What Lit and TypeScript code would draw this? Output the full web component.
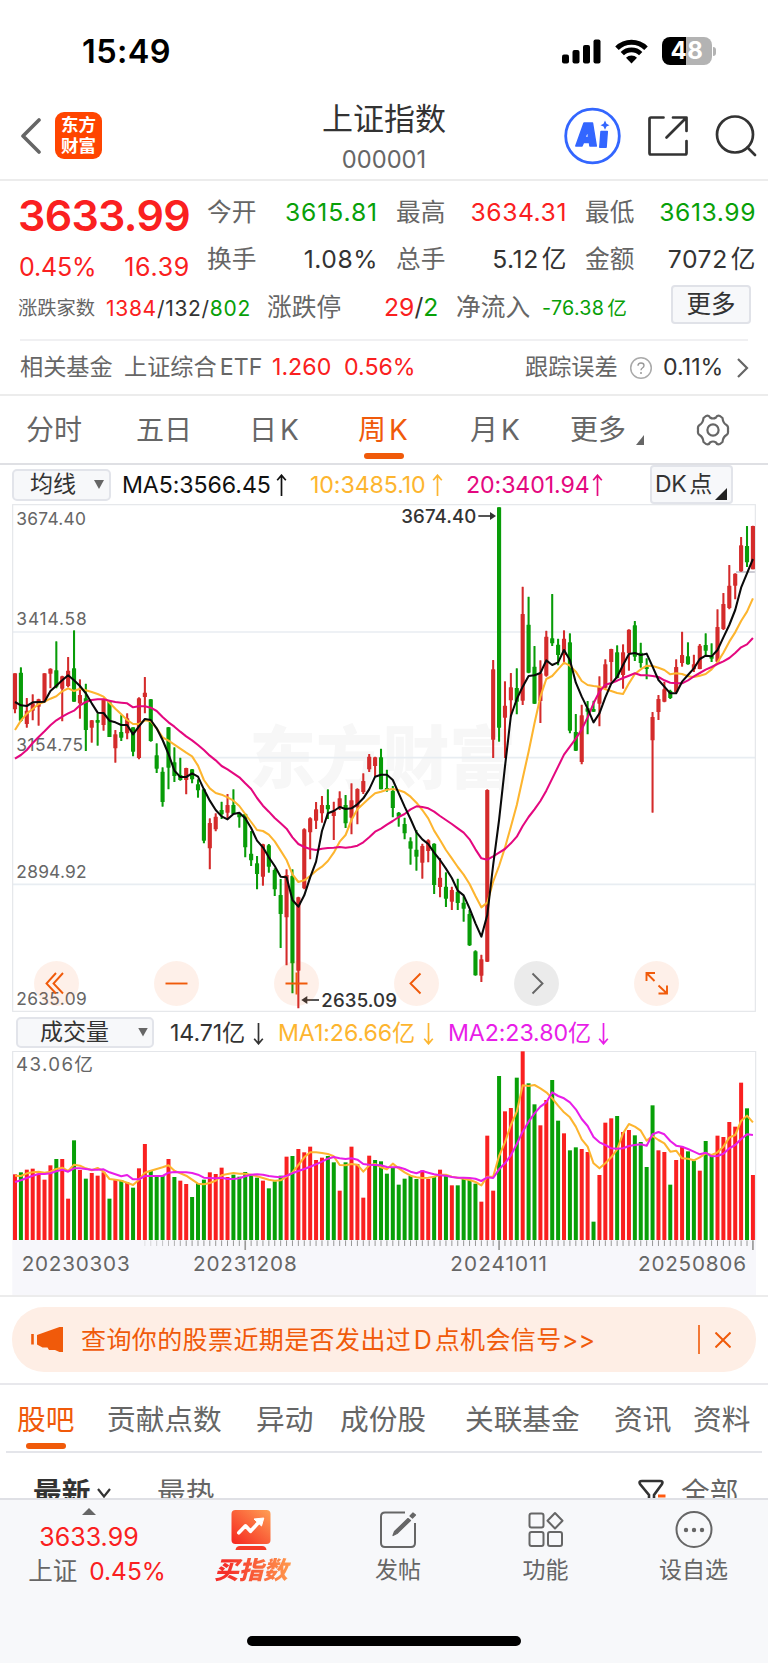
import { LitElement, html, svg, css } from "lit";
import { customElement } from "lit/decorators.js";

const STEP = 17.71;
const FIRST = 45;
const xAt = (i: number) => FIRST + i * STEP;

// One entry per week: direction, high, body top, body bottom, low (chart units).
const CANDLES = `R 520 520 628 640|G 502 518 662 665|R 594 632 672 683|R 583 610 632 661|R 596 598 620 677|R 520 520 605 607|R 505 506 521 565|G 424 511 560 565|R 527 529 566 664|R 471 512 558 562|G 391 505 605 605|R 538 585 610 656|G 551 595 690 753|R 660 661 683 728|G 640 660 668 737|R 596 598 675 692|G 600 605 711 711|R 690 703 745 788|G 645 696 713 723|R 640 655 700 718|G 682 682 755 769|R 592 595 774 778|R 531 578 591 640|G 597 598 723 725|G 730 766 806 819|G 802 815 906 920|G 681 682 803 868|G 742 787 828 846|G 773 825 840 842|R 803 804 840 883|G 807 808 838 850|G 838 853 871 893|G 865 868 1022 1030|R 955 969 1045 1108|R 940 950 988 994|G 905 930 943 957|R 882 915 938 958|G 868 915 942 942|G 938 942 952 983|G 940 942 1042 1072|G 993 1061 1081 1098|G 1068 1090 1122 1168|R 1031 1033 1130 1157|G 1032 1036 1100 1118|G 1105 1110 1168 1188|G 1137 1185 1242 1344|R 1108 1125 1252 1396|G 1108 1128 1390 1480|R 1190 1192 1412 1525|R 985 988 1165 1168|R 952 955 997 1078|R 906 928 962 987|R 888 915 940 968|G 868 915 928 957|R 905 934 948 1020|R 874 895 922 930|G 885 915 970 984|R 850 901 953 1003|R 865 867 922 973|R 820 843 876 882|R 762 770 808 816|R 770 772 798 830|G 746 772 868 868|G 809 864 870 875|G 858 873 924 952|G 936 938 950 980|G 953 972 1000 1018|G 1012 1024 1046 1094|G 990 1049 1070 1112|R 1031 1038 1088 1136|R 1018 1021 1053 1087|G 1030 1031 1155 1182|R 1074 1133 1161 1192|G 1117 1160 1196 1221|R 1160 1170 1205 1230|G 1136 1175 1209 1230|G 1188 1208 1226 1265|G 1230 1242 1336 1338|G 1351 1354 1426 1427|R 1364 1378 1427 1446|R 868 870 1385 1386|R 480 508 719 774|G 22 22 683 725|R 544 617 653 774|R 519 562 601 650|G 505 564 605 643|R 260 342 602 615|G 290 374 518 520|G 438 500 611 612|R 481 520 603 669|R 392 410 527 530|G 282 415 430 438|G 416 434 465 496|R 391 416 465 493|G 400 427 692 700|G 642 696 752 753|R 614 646 786 793|G 603 625 635 703|G 602 627 635 636|R 529 560 611 679|R 478 493 563 566|R 446 447 486 545|G 436 457 534 535|R 433 457 525 566|R 388 389 460 512|G 363 376 470 483|G 428 458 489 503|G 475 499 507 538|R 636 651 721 938|R 585 597 636 660|R 545 568 605 607|G 569 573 594 597|R 478 501 576 580|R 395 465 489 500|G 427 469 493 494|R 464 493 508 516|R 432 437 507 508|G 400 435 452 468|G 430 468 476 486|R 328 381 485 488|R 279 312 387 390|R 195 257 324 328|R 220 221 257 298|R 111 136 214 215|G 78 138 187 201|R 77 78 208 208`
  .split("|")
  .map((s) => {
    const [d, ...v] = s.split(" ");
    return { up: d === "R", v: v.map(Number) };
  });

const nums = (s: string) => s.trim().split(/\s+/).map(Number);

const MA5 = nums(`606 616 618 607 606 605 573 557 541 526 541 558 580 610 638 639 662 667 675 675 703 679 657 660 685 720 762 812 831 831 820 830 868 902 930 949 958 942 938 955 984 1022 1042 1072 1098 1130 1132 1200 1220 1186 1132 1085 993 940 933 921 927 925 913 895 868 830 824 824 840 880 920 957 997 1018 1032 1058 1080 1106 1134 1172 1186 1225 1270 1310 1245 1095 960 800 648 597 560 528 526 519 481 495 487 450 480 548 590 626 667 640 592 551 531 495 462 459 465 461 500 540 560 580 580 545 525 505 477 467 469 450 412 375 330 263 220 177`);
const MA10 = nums(`690 662 641 627 612 605 596 589 574 565 573 566 571 576 582 590 608 626 643 660 672 672 661 664 685 712 722 734 746 758 769 797 840 865 879 884 892 902 918 942 966 990 993 1004 1024 1052 1080 1123 1146 1141 1128 1112 1100 1083 1058 1025 1005 960 928 911 895 880 875 869 867 871 877 890 908 930 955 992 1020 1050 1075 1101 1124 1152 1188 1222 1208 1145 1098 1043 980 915 835 755 670 590 537 528 508 488 497 515 543 555 558 560 568 573 579 582 550 522 508 497 498 503 510 523 520 522 529 531 527 522 508 487 458 425 397 363 335 295`);
const MA20 = nums(`776 765 750 729 711 694 676 661 650 640 632 616 606 600 598 598 602 606 608 610 622 619 619 623 633 651 667 680 695 709 721 735 750 767 781 798 808 820 832 850 867 894 917 935 954 970 986 1012 1032 1041 1047 1050 1046 1044 1043 1041 1043 1041 1037 1027 1012 995 986 974 963 951 942 928 919 921 925 935 948 960 972 985 998 1018 1048 1075 1079 1069 1058 1047 1030 1010 978 951 928 903 872 836 800 764 740 716 688 652 610 575 554 549 542 534 527 520 526 526 528 531 541 548 550 550 541 529 519 509 501 492 484 474 459 442 433 414`);

const VOLUME = `R493 G487 R479 R476 R491 R509 R466 G447 R447 R566 G391 R480 G506 R489 R497 R487 G566 R509 G510 R516 G533 R475 R402 G482 G497 G497 R447 G501 R512 R522 G561 G519 G509 R487 R492 R473 R501 G494 G500 G486 G495 G503 R512 G535 G514 G497 R440 G438 R417 R427 R410 R450 R443 G438 G457 R542 G457 R410 R462 R563 R437 G450 G454 G491 G473 G524 G506 G498 G507 R481 R507 G501 R479 G498 R526 G526 G506 G509 G521 R575 R377 R542 G198 R304 R294 G203 R124 G220 G283 R346 R270 G210 G332 R370 G421 G412 R417 R426 G635 R495 R338 R325 G318 R366 R360 G376 G396 G471 G286 R421 R426 G524 R450 R410 G424 G452 R482 G393 G437 R377 R381 R336 R350 R218 G295 R495`
  .split(" ")
  .map((s) => ({ up: s[0] === "R", y: Number(s.slice(1)) }));

const VMA1 = nums(`497 498 490 487 485 488 485 477 473 483 464 467 475 481 474 485 507 509 512 518 525 509 488 482 477 472 466 482 490 497 509 521 523 519 512 496 492 489 491 491 494 499 504 509 512 511 500 487 465 442 427 427 429 432 439 465 466 462 464 485 466 462 472 478 461 475 487 497 502 504 503 500 494 494 500 503 506 510 516 526 500 500 438 397 345 305 226 228 225 235 247 265 287 307 322 350 388 410 460 475 460 442 418 370 342 350 362 392 378 390 400 425 422 445 446 451 442 430 435 427 410 383 375 333 317 337`);
const VMA2 = nums(`516 511 504 497 492 492 490 484 479 485 475 475 477 479 479 478 487 493 499 495 508 508 498 498 498 498 488 486 487 487 489 494 503 504 505 503 507 507 505 499 494 493 494 498 500 502 497 490 483 477 470 463 455 446 441 445 447 445 449 462 464 465 466 471 472 472 477 485 490 483 488 493 496 497 501 503 503 504 506 513 502 504 478 460 436 402 365 335 310 290 277 247 258 265 277 298 327 348 381 397 405 415 416 415 408 405 403 407 373 366 373 393 407 410 417 425 433 428 439 438 431 415 405 387 373 375`);

const line = (vals: number[]) => vals.map((y, i) => `${xAt(i).toFixed(1)},${y}`).join(" ");

const base = css`
  * { box-sizing: border-box; }
  svg { display: block; }
`;

@customElement("price-chart")
class PriceChart extends LitElement {
  static styles = [base, css`
    :host { display: block; position: relative; height: 508px; }
    text { font-family: Inter, "Noto Sans CJK SC", sans-serif; }
    .axis { font-size: 52px; fill: #666; }
    .mark { font-size: 56px; font-weight: 500; fill: #333; }
    .wm { font-family: "Noto Sans CJK SC", sans-serif; font-weight: 900; font-size: 206px; fill: #f7f7f7; }
    .tools { position: absolute; left: 34px; top: 457px; display: flex; gap: 75px; }
    .tool { width: 45px; height: 45px; border-radius: 50%; background: rgba(240, 90, 10, 0.09); }
    .next { background: rgba(0, 0, 0, 0.08); }
    .ico { fill: none; stroke: #f05a0a; stroke-width: 1.9; }
    .ico.dim { stroke: #666; }
  `];

  render() {
    const grids = [396, 773, 1153];
    const labels: [string, number][] = [["3674.40", 75], ["3414.58", 375], ["3154.75", 753], ["2894.92", 1134], ["2635.09", 1514]];
    const tools = [
      svg`<path d="M22 12 L12.5 22.5 L22 32.500 M29 12 L19.500 22.5 L29 32.500"/>`,
      svg`<path d="M11.500 22.500 H33.500"/>`,
      svg`<path d="M11.500 22.500 H33.500 M22.500 11.500 V33.500"/>`,
      svg`<path d="M26.500 12.500 L16.500 22.500 L26.500 32.500"/>`,
      svg`<path d="M18.500 12.500 L28.500 22.500 L18.500 32.500"/>`,
      svg`<path d="M12.500 20 V12 H21 M12.500 12 L20.500 20 M33 24.500 V32.500 H24.500 M33 32.500 L24.500 24.500"/>`,
    ];
    return html`
      <svg width="768" height="508" viewBox="0 12 2304 1524">
        <text class="wm" x="748" y="849" textLength="800" lengthAdjust="spacingAndGlyphs">东方财富</text>
        ${grids.map((y) => svg`<line x1="38" x2="2266" y1=${y} y2=${y} stroke="#e8edf2" stroke-width="5"/>`)}
        <line x1="2208" x2="2266" y1="216" y2="216" stroke="#ccccd4" stroke-width="6"/>
        <rect x="38" y="14" width="2228" height="1520" fill="none" stroke="#e4e6ea" stroke-width="3.500"/>
        ${labels.map(([t, y]) => svg`<text class="axis" x="49" y=${y} textLength=${t === "3674.40" ? 209 : t === "3154.75" ? 200 : 211}>${t}</text>`)}
        ${CANDLES.map(({ up, v }, i) => svg`
          <g fill=${up ? "#d42b2b" : "#089c08"}>
            <rect x=${xAt(i) - 3.1} y=${v[0]} width="6.200" height=${v[3] - v[0]} rx="1"/>
            <rect x=${xAt(i) - 6.2} y=${v[1]} width="12.400" height=${Math.max(v[2] - v[1], 6)} rx="1"/>
          </g>`)}
        <g fill="none" stroke-width="6.200" stroke-linejoin="round">
          <polyline points=${line(MA10)} stroke="#fdb52f"/>
          <polyline points=${line(MA20)} stroke="#e4087f"/>
          <polyline points=${line(MA5)} stroke="#0a0a0a"/>
        </g>
        <text class="mark" x="1204" y="70" textLength="225">3674.40</text>
        <path d="M1435 48 H1475" stroke="#333" stroke-width="5"/><path d="M1470 36 L1488 48 L1470 60Z" fill="#333"/>
        <text class="mark" x="964" y="1522" textLength="227">2635.09</text>
        <path d="M957 1500 H920" stroke="#333" stroke-width="5"/><path d="M922 1488 L904 1500 L922 1512Z" fill="#333"/>
      </svg>
      <div class="tools">
        ${tools.map((t, i) => html`<div class="tool ${i === 4 ? "next" : ""}">
          <svg class="ico ${i === 4 ? "dim" : ""}" width="45" height="45">${t}</svg></div>`)}
      </div>`;
  }
}

@customElement("volume-chart")
class VolumeChart extends LitElement {
  static styles = [base, css`
    :host { display: block; height: 244px; }
    text { font-family: Inter, "Noto Sans CJK SC", sans-serif; fill: #666; }
    .top { font-size: 56px; }
    .date { font-size: 62px; }
  `];
  render() {
    const dates: [string, number, number][] = [["20230303", 65, 324], ["20231208", 579, 311], ["20241011", 1351, 290], ["20250806", 1914, 324]];
    return html`<svg width="768" height="244" viewBox="0 123 2304 732">
      <rect x="37" y="690" width="2231" height="165" fill="#f7f7fb"/>
      <path d="M38 690 V124 H2267 V690" fill="none" stroke="#e4e6ea" stroke-width="3.500"/>
      ${VOLUME.map(({ up, y }, i) => svg`<rect x=${xAt(i) - 6} y=${y} width="12" height=${690 - y} fill=${up ? "#fa2020" : "#08a008"}/>`)}
      ${VOLUME.map((_, i) => i < 22 ? null : svg`<line x1=${xAt(i)} x2=${xAt(i)} y1="691" y2=${[39, 82, 125].includes(i) ? 720 : 708}
        stroke="#999" stroke-width=${[39, 82, 125].includes(i) ? 5 : 3} opacity=${i < 29 ? 0.25 + (i - 22) * 0.1 : 1}/>`)}
      <g fill="none" stroke-width="6.200" stroke-linejoin="round">
        <polyline points=${line(VMA1)} stroke="#fdb52f"/>
        <polyline points=${line(VMA2)} stroke="#e81ee8"/>
      </g>
      <text class="top" x="48" y="182" textLength="231">43.06亿</text>
      ${dates.map(([t, x, w]) => svg`<text class="date" x=${x} y="784" textLength=${w}>${t}</text>`)}
    </svg>`;
  }
}

const arrow = (down = false) => html`<svg class="arrow" width="11" height="23" viewBox="0 0 11 23">
  <path d=${down ? "M5.500 1 V21.500 M1.200 16.800 L5.500 21.800 L9.800 16.800" : "M5.500 22 V1.500 M1.200 6.200 L5.500 1.200 L9.800 6.200"}
    fill="none" stroke="currentColor" stroke-width="1.700"/></svg>`;

@customElement("app-root")
class AppRoot extends LitElement {
  static styles = [base, css`
    :host {
      display: flex; flex-direction: column; width: 768px; height: 1663px; overflow: hidden;
      background: #fff; color: #333; white-space: nowrap;
      font-family: Inter, "Noto Sans CJK SC", sans-serif; line-height: 1; font-size: 24px;
    }
    .red { color: #fa2020; } .green { color: #08a008; } .gray { color: #666; }
    .u { margin-left: 3px; }
    .status { height: 91px; flex: none; display: grid; grid-template-columns: 82px 480px 53px 47px auto; align-items: center; padding-top: 11px; color: #000; }
    .time { grid-column: 2; font-size: 32.500px; font-weight: 600; letter-spacing: 0.4px; padding-top: 3px; }
    .batt { display: flex; align-items: center; gap: 1px; }
    .cell { width: 50px; height: 28px; border-radius: 8px; background: linear-gradient(90deg, #000 48%, #b3b3b3 48%); color: #fff; font-size: 24px; font-weight: 700; display: flex; align-items: center; justify-content: center; letter-spacing: 0.5px; }
    .nub { width: 3px; height: 9px; border-radius: 0 4px 4px 0; background: #b3b3b3; }

    .head { height: 90px; flex: none; display: grid; grid-template-columns: 20px 35px 267px 242px 83px 68px 53px; align-items: center; border-bottom: 2px solid #ececec; padding-top: 2px; }
    .back { grid-column: 2; }
    .logo { width: 47px; height: 47px; border-radius: 9px; background: #ff4500; color: #fff; font-weight: 700; font-size: 17.500px; line-height: 21px; display: flex; flex-direction: column; align-items: center; justify-content: center; padding-bottom: 1px; margin-top: -2px; }
    .title { display: flex; flex-direction: column; align-items: center; width: 124px; }
    .name { font-size: 31px; line-height: 42px; margin-top: 2px; }
    .code { font-size: 23.700px; line-height: 32px; color: #666; letter-spacing: 0; margin-top: 4px; }

    .quote { height: 215px; flex: none; border-bottom: 2px solid #ececec; }
    .qtop { display: grid; grid-template-columns: 188px 171px 18px 171px 18px 171px; grid-template-rows: 47px 47px; padding: 8px 0 0 19px; align-items: center; }
    .lead { grid-row: 1 / 3; display: flex; flex-direction: column; align-self: start; }
    .price { font-size: 43px; font-weight: 600; letter-spacing: -0.7px; line-height: 54px; margin-top: -1px; margin-left: -1px; }
    .chg { display: flex; justify-content: space-between; width: 171px; font-size: 25px; line-height: 50px; letter-spacing: -0.2px; }
    .amt { letter-spacing: 0.7px; }
    .pair { display: flex; justify-content: space-between; align-items: center; font-size: 24.700px; }
    .val { letter-spacing: 0.55px; }
    .val.wide { letter-spacing: 0.9px; }
    .c2 { grid-column: 2; } .c4 { grid-column: 4; } .c6 { grid-column: 6; }
    .qrow { display: grid; grid-template-columns: 88px 161px 117px 72px 86px 129px 80px; align-items: center; height: 46px; padding-left: 18px; margin-top: 1px; }
    .small { font-size: 19.300px; padding-top: 4px; }
    .flow { font-size: 19.700px; letter-spacing: 0.3px; }
    .cnt { font-size: 21px; padding-top: 3px; letter-spacing: 0.7px; }
    .mid { font-size: 24.700px; }
    .more { width: 80px; height: 39px; border: 2px solid #e0e2e8; border-radius: 4px; background: #f7f8fa; display: flex; align-items: center; justify-content: center; font-size: 24.500px; margin-top: -5px; }
    .fund { display: grid; grid-template-columns: 104px 148px 72px 181px 104px 34px 73px 14px; align-items: center; height: 55px; margin: 9px 20px 0; width: 728px; border-top: 2px solid #f0f0f2; font-size: 23.200px; }

    .tabs { height: 69px; flex: none; display: grid; grid-template-columns: 26px 110px 113px 109px 112px 100px 66px 61px auto; border-bottom: 2px solid #dfe0e4; color: #666; font-size: 28px; line-height: 69px; }
    .tab { white-space: nowrap; }
    .first { grid-column: 2; }
    .on { color: #f05a0a; position: relative; }
    .on::after { content: ""; position: absolute; left: 6px; top: 57px; width: 40px; height: 6px; border-radius: 3px; background: #f05a0a; }
    .corner { width: 8px; height: 10px; background: #666; clip-path: polygon(100% 0, 100% 100%, 0 100%); margin-top: 39px; }
    .gear { margin-top: 17px; margin-left: -2px; }

    .mas { height: 39px; flex: none; display: grid; grid-template-columns: 12px 110px 154px 34px 122px 34px 126px 58px 83px; align-items: center; font-size: 23px; }
    .drop { grid-column: 2; display: flex; align-items: center; width: 99px; height: 32px; border: 2px solid #e2e4ea; border-radius: 5px; background: #f7f8fa; padding-left: 16px; gap: 18px; }
    .tri { width: 10px; height: 9px; background: #666; clip-path: polygon(0 0, 100% 0, 50% 100%); }
    .black { color: #111; } .gold { color: #fdb52f; } .pink { color: #e4087f; } .vio { color: #e81ee8; }
    .ma { font-size: 23.200px; letter-spacing: -0.1px; padding-top: 2px; }
    .arrow { margin-top: 1px; }
    .dk { width: 83px; height: 39px; background: #f7f8fa; border: 2px solid #e2e4ea; border-radius: 4px; display: flex; align-items: center; position: relative; padding-left: 3px; letter-spacing: -0.4px; }
    .dk::after { content: ""; position: absolute; right: 4px; bottom: 2px; width: 12px; height: 12px; background: #222; clip-path: polygon(100% 0, 100% 100%, 0 100%); }
    .vols { height: 39px; flex: none; display: grid; grid-template-columns: 16px 154px 83px 25px 145px 25px 150px auto; align-items: center; font-size: 23px; padding-top: 2px; }
    .vdrop { width: 138px; height: 31px; padding-left: 22px; gap: 29px; margin-top: -1px; }

    .promo { height: 90px; flex: none; border-top: 2px solid #ececec; border-bottom: 2px solid #e8e8ec; padding: 10px 12px; }
    .pill { height: 65px; border-radius: 32px; background: #feeee5; display: grid; grid-template-columns: 19px 50px 617px 17px auto; align-items: center; color: #f05a0a; font-size: 25px; }
    .ptext { letter-spacing: 0.4px; padding-top: 1px; }
    .ptext .d { margin: 0 2.500px; }
    .bar { width: 2px; height: 29px; background: #f05a0a; opacity: 0.8; }
    .nav { height: 68px; flex: none; margin: 0 6px; padding-left: 11px; border-bottom: 2px solid #e4e5ea; display: grid; grid-template-columns: 90px 149px 84px 125px 149px 79px auto; font-size: 28.700px; line-height: 70px; color: #666; }
    .nav .on::after { left: 9px; top: 58px; width: 40px; }
    .filter { height: 45px; flex: none; overflow: hidden; display: grid; grid-template-columns: 33px 64px 60px 481px 43px auto; font-size: 28.700px; line-height: 29px; padding-top: 25px; color: #666; }
    .cur { grid-column: 2; color: #333; font-weight: 700; }
    .foot { height: 165px; flex: none; background: #f7f8fa; border-top: 2px solid #dfe0e5; display: flex; flex-direction: column; align-items: center; }
    .acts { width: 768px; height: 136px; display: grid; grid-template-columns: 178px 146px 148px 147px 149px; justify-items: center; color: #666; font-size: 23px; }
    .act { display: flex; flex-direction: column; align-items: center; }
    .act svg { margin-top: 9px; height: 42px; }
    .lbl { line-height: 28px; margin-top: 5px; }
    .buy { font-weight: 900; font-size: 24.500px; font-style: italic; background: linear-gradient(90deg, #f5302a 20%, #ff9a4d); -webkit-background-clip: text; background-clip: text; color: transparent; padding: 0 3px; }
    .idx { padding-top: 8px; }
    .up { width: 14px; height: 7px; background: #666; clip-path: polygon(50% 0, 100% 100%, 0 100%); }
    .inum { font-size: 25px; line-height: 34px; margin-top: 5px; }
    .irow { font-size: 24.500px; line-height: 34px; display: flex; gap: 12px; margin-left: 16px; }
    .home { width: 274px; height: 10px; border-radius: 5px; background: #000; }
  `];

  render() {
    return html`
      <div class="status">
        <div class="time">15:49</div>
        <svg width="39" height="25" viewBox="0 0 39 25"><rect y="15.500" width="7" height="9" rx="2"/><rect x="10.500" y="11" width="7" height="13.500" rx="2"/><rect x="21" y="6" width="7" height="18.500" rx="2"/><rect x="31.500" y="0.500" width="7" height="24" rx="2"/></svg>
        <svg width="33" height="25" viewBox="0 0 33 25"><path d="M2 9.200 A20.500 20.500 0 0 1 31 9.200" fill="none" stroke="#000" stroke-width="5"/><path d="M7.300 14.700 A13 13 0 0 1 25.700 14.700" fill="none" stroke="#000" stroke-width="4.600"/><path d="M16.500 24.500 L11 18.800 A7.800 7.800 0 0 1 22 18.800Z"/></svg>
        <div class="batt"><div class="cell">48</div><div class="nub"></div></div>
      </div>

      <div class="head">
        <svg class="back" width="22" height="36" viewBox="0 0 22 36"><path d="M19 2 L3 18 L19 34" fill="none" stroke="#666" stroke-width="3.600" stroke-linecap="round" stroke-linejoin="round"/></svg>
        <div class="logo"><span>东方</span><span>财富</span></div>
        <div class="title"><div class="name">上证指数</div><div class="code">000001</div></div>
        <svg width="57" height="58" viewBox="-28.500 -29 57 58"><circle r="26.800" fill="#fff" stroke="#3366ff" stroke-width="2.800"/>
          <g fill="#3366ff" stroke="#3366ff" stroke-width="1.500" stroke-linejoin="round"><path fill-rule="evenodd" d="M-8.500 -13 H0 L3.800 10 H-2.600 L-3.100 6.500 H-9 L-10.500 10 H-16.700Z M-4 1.500 L-4.800 -5.500 L-7.500 1.500Z"/><path d="M8.500 -4.500 H14.800 L13.600 11.200 H7.300Z"/></g>
          <path d="M12.500 -15.500 L14 -12.200 L17 -10.800 L14 -9.400 L12.500 -6.200 L11 -9.400 L8 -10.800 L11 -12.200Z" fill="#3366ff"/></svg>
        <svg width="42" height="42" viewBox="0 0 42 42"><g fill="none" stroke="#333" stroke-width="2.700" stroke-linejoin="round" stroke-linecap="round"><path d="M16.500 2.500 H4 Q2.500 2.500 2.500 4 V38 Q2.500 39.500 4 39.500 H38 Q39.500 39.500 39.500 38 V26"/><path d="M26 2.500 H39.500 V16 M39 3 L19.500 22.500"/></g></svg>
        <svg width="42" height="42" viewBox="0 0 42 42"><g fill="none" stroke="#333" stroke-width="2.700" stroke-linecap="round"><circle cx="20" cy="19.500" r="18"/><path d="M32.500 32.500 L40 40"/></g></svg>
      </div>

      <div class="quote">
        <div class="qtop">
          <div class="lead red"><div class="price">3633.99</div><div class="chg"><span>0.45%</span><span class="amt">16.39</span></div></div>
          <div class="pair c2"><span class="gray">今开</span><span class="val wide green">3615.81</span></div>
          <div class="pair c4"><span class="gray">最高</span><span class="val red">3634.31</span></div>
          <div class="pair c6"><span class="gray">最低</span><span class="val green">3613.99</span></div>
          <div class="pair c2"><span class="gray">换手</span><span class="val">1.08%</span></div>
          <div class="pair c4"><span class="gray">总手</span><span class="val">5.12<span class="u">亿</span></span></div>
          <div class="pair c6"><span class="gray">金额</span><span class="val">7072<span class="u">亿</span></span></div>
        </div>
        <div class="qrow">
          <span class="small gray">涨跌家数</span>
          <span class="cnt"><span class="red">1384</span>/132/<span class="green">802</span></span>
          <span class="mid gray">涨跌停</span>
          <span class="mid"><span class="red">29</span>/<span class="green">2</span></span>
          <span class="mid gray">净流入</span>
          <span class="small flow green">-76.38<span class="u">亿</span></span>
          <div class="more">更多</div>
        </div>
        <div class="fund">
          <span class="gray">相关基金</span><span class="gray">上证综合<span class="u">ETF</span></span><span class="red">1.260</span><span class="red">0.56%</span>
          <span class="gray">跟踪误差</span>
          <svg width="24" height="24" viewBox="0 0 24 24"><circle cx="12" cy="12" r="10.300" fill="none" stroke="#aaa" stroke-width="1.500"/><path d="M9 9.800 Q9 7 12 7 Q15 7 15 9.500 Q15 11 13.400 12 Q12 12.900 12 14.300" fill="none" stroke="#999" stroke-width="1.400"/><circle cx="12" cy="17" r="1" fill="#999"/></svg>
          <span>0.11%</span>
          <svg width="14" height="22" viewBox="0 0 14 22"><path d="M2 2 L11 11 L2 20" fill="none" stroke="#666" stroke-width="2.200"/></svg>
        </div>
      </div>

      <div class="tabs">
        <div class="tab first">分时</div><div class="tab">五日</div><div class="tab">日<span class="u">K</span></div><div class="tab on">周<span class="u">K</span></div><div class="tab">月<span class="u">K</span></div><div class="tab">更多</div>
        <div class="corner"></div>
        <svg class="gear" width="36" height="34" viewBox="-18 -17 36 34"><g fill="none" stroke="#666" stroke-width="2.200" stroke-linejoin="round"><path d="M-7 -14 Q-4 -15 -3 -12.500 Q0 -10.500 3 -12.500 Q4 -15 7 -14 L9.500 -12 Q10 -7 13.500 -5 Q15.500 -4 15 0 Q15.500 4 13.500 5 Q10 7 9.500 12 L7 14 Q4 15 3 12.500 Q0 10.500 -3 12.500 Q-4 15 -7 14 L-9.500 12 Q-10 7 -13.500 5 Q-15.500 4 -15 0 Q-15.500 -4 -13.500 -5 Q-10 -7 -9.500 -12Z"/><circle r="5.600"/></g></svg>
      </div>

      <div class="mas">
        <div class="drop"><span>均线</span><i class="tri"></i></div>
        <span class="ma black">MA5:3566.45</span><span class="black">${arrow()}</span>
        <span class="ma gold">10:3485.10</span><span class="gold">${arrow()}</span>
        <span class="ma pink">20:3401.94</span><span class="pink">${arrow()}</span>
        <div class="dk">DK<span class="u">点</span></div>
      </div>
      <price-chart></price-chart>
      <div class="vols">
        <div class="drop vdrop"><span>成交量</span><i class="tri"></i></div>
        <span class="ma">14.71亿</span><span>${arrow(true)}</span>
        <span class="ma gold">MA1:26.66亿</span><span class="gold">${arrow(true)}</span>
        <span class="ma vio">MA2:23.80亿</span><span class="vio">${arrow(true)}</span>
      </div>
      <volume-chart></volume-chart>

      <div class="promo"><div class="pill">
        <i></i>
        <svg width="34" height="27" viewBox="0 0 34 27"><path d="M1.500 8 V18.500" stroke="#f05a0a" stroke-width="2.600"/><path d="M6 9 L28.500 1 H32 V26 H28.500 L24 24 H18 L16.500 21.500 H11.500 L6 18.500Z" fill="#f05a0a"/></svg>
        <span class="ptext">查询你的股票近期是否发出过<span class="d">D</span>点机会信号&gt;&gt;</span>
        <i class="bar"></i>
        <svg width="16" height="16" viewBox="0 0 16 16"><path d="M0.500 0.500 L15.500 15.500 M15.500 0.500 L0.500 15.500" stroke="#f05a0a" stroke-width="2"/></svg>
      </div></div>

      <div class="nav">
        <span class="on">股吧</span><span>贡献点数</span><span>异动</span><span>成份股</span><span>关联基金</span><span>资讯</span><span>资料</span>
      </div>
      <div class="filter">
        <span class="cur">最新</span>
        <svg width="14" height="22" viewBox="0 0 14 22"><path d="M1 11 L7 18.500 L13 11" fill="none" stroke="#333" stroke-width="2.200"/></svg>
        <span>最热</span>
        <svg width="30" height="26" viewBox="0 0 30 26"><path d="M11 26 V17 L2 6 Q0.500 3 4 3 H22 Q25.500 3 24 6 L16 17 V26" fill="none" stroke="#333" stroke-width="2.600"/><path d="M20 18 H27.500" stroke="#ff5a10" stroke-width="3"/></svg>
        <span>全部</span>
      </div>

      <div class="foot">
        <div class="acts">
          <div class="act idx"><i class="up"></i><span class="inum red">3633.99</span><span class="irow"><span>上证</span><span class="red">0.45%</span></span></div>
          <div class="act"><svg width="40" height="42" viewBox="0 0 40 42"><defs><linearGradient id="g" x1="0" y1="1" x2="1" y2="0"><stop offset="0" stop-color="#f5241e"/><stop offset="1" stop-color="#ffa055"/></linearGradient></defs><rect x="0.500" y="1" width="39" height="34" rx="4" fill="url(#g)"/><path d="M4.500 41 Q5 37 9 37 H31 Q35 37 35.500 41Z" fill="#f53a28"/><path d="M7.800 23.800 L14.500 16.800 L19.500 22.300 L28.500 12.500" fill="none" stroke="#fff" stroke-width="3.600" stroke-linejoin="round" stroke-linecap="round"/><path d="M23 10 L32.800 9 L30.500 17Z" fill="#fff" stroke="#fff" stroke-linejoin="round"/></svg><span class="lbl buy">买指数</span></div>
          <div class="act"><svg width="38" height="42" viewBox="0 0 38 42"><g fill="none" stroke="#666" stroke-width="2"><path d="M26 3.500 H6 Q2 3.500 2 7.500 V34 Q2 38 6 38 H32 Q36 38 36 34 V14"/></g><path d="M34 4 L36.500 6 L33.500 9 L31 7Z M29 9.500 L31.500 11.500 L18 24.500 L14 26.500 L15.500 22.500Z" fill="#666" stroke="#666" stroke-width="1.200" stroke-linejoin="round"/></svg><span class="lbl">发帖</span></div>
          <div class="act"><svg width="36" height="42" viewBox="0 0 36 42"><g fill="none" stroke="#666" stroke-width="2"><rect x="1.500" y="4.500" width="14" height="14" rx="2"/><rect x="1.500" y="23" width="14" height="14" rx="2"/><rect x="20" y="23" width="14" height="14" rx="2"/><path d="M27 4 L34.500 11.800 L27 19.500 L19.500 11.800Z" stroke-linejoin="round"/></g></svg><span class="lbl">功能</span></div>
          <div class="act"><svg width="38" height="42" viewBox="0 0 38 42"><circle cx="19" cy="20.500" r="17.500" fill="none" stroke="#666" stroke-width="2"/><g fill="#666"><circle cx="11" cy="21" r="2.200"/><circle cx="19" cy="21" r="2.200"/><circle cx="27" cy="21" r="2.200"/></g></svg><span class="lbl">设自选</span></div>
        </div>
        <div class="home"></div>
      </div>`;
  }
}
